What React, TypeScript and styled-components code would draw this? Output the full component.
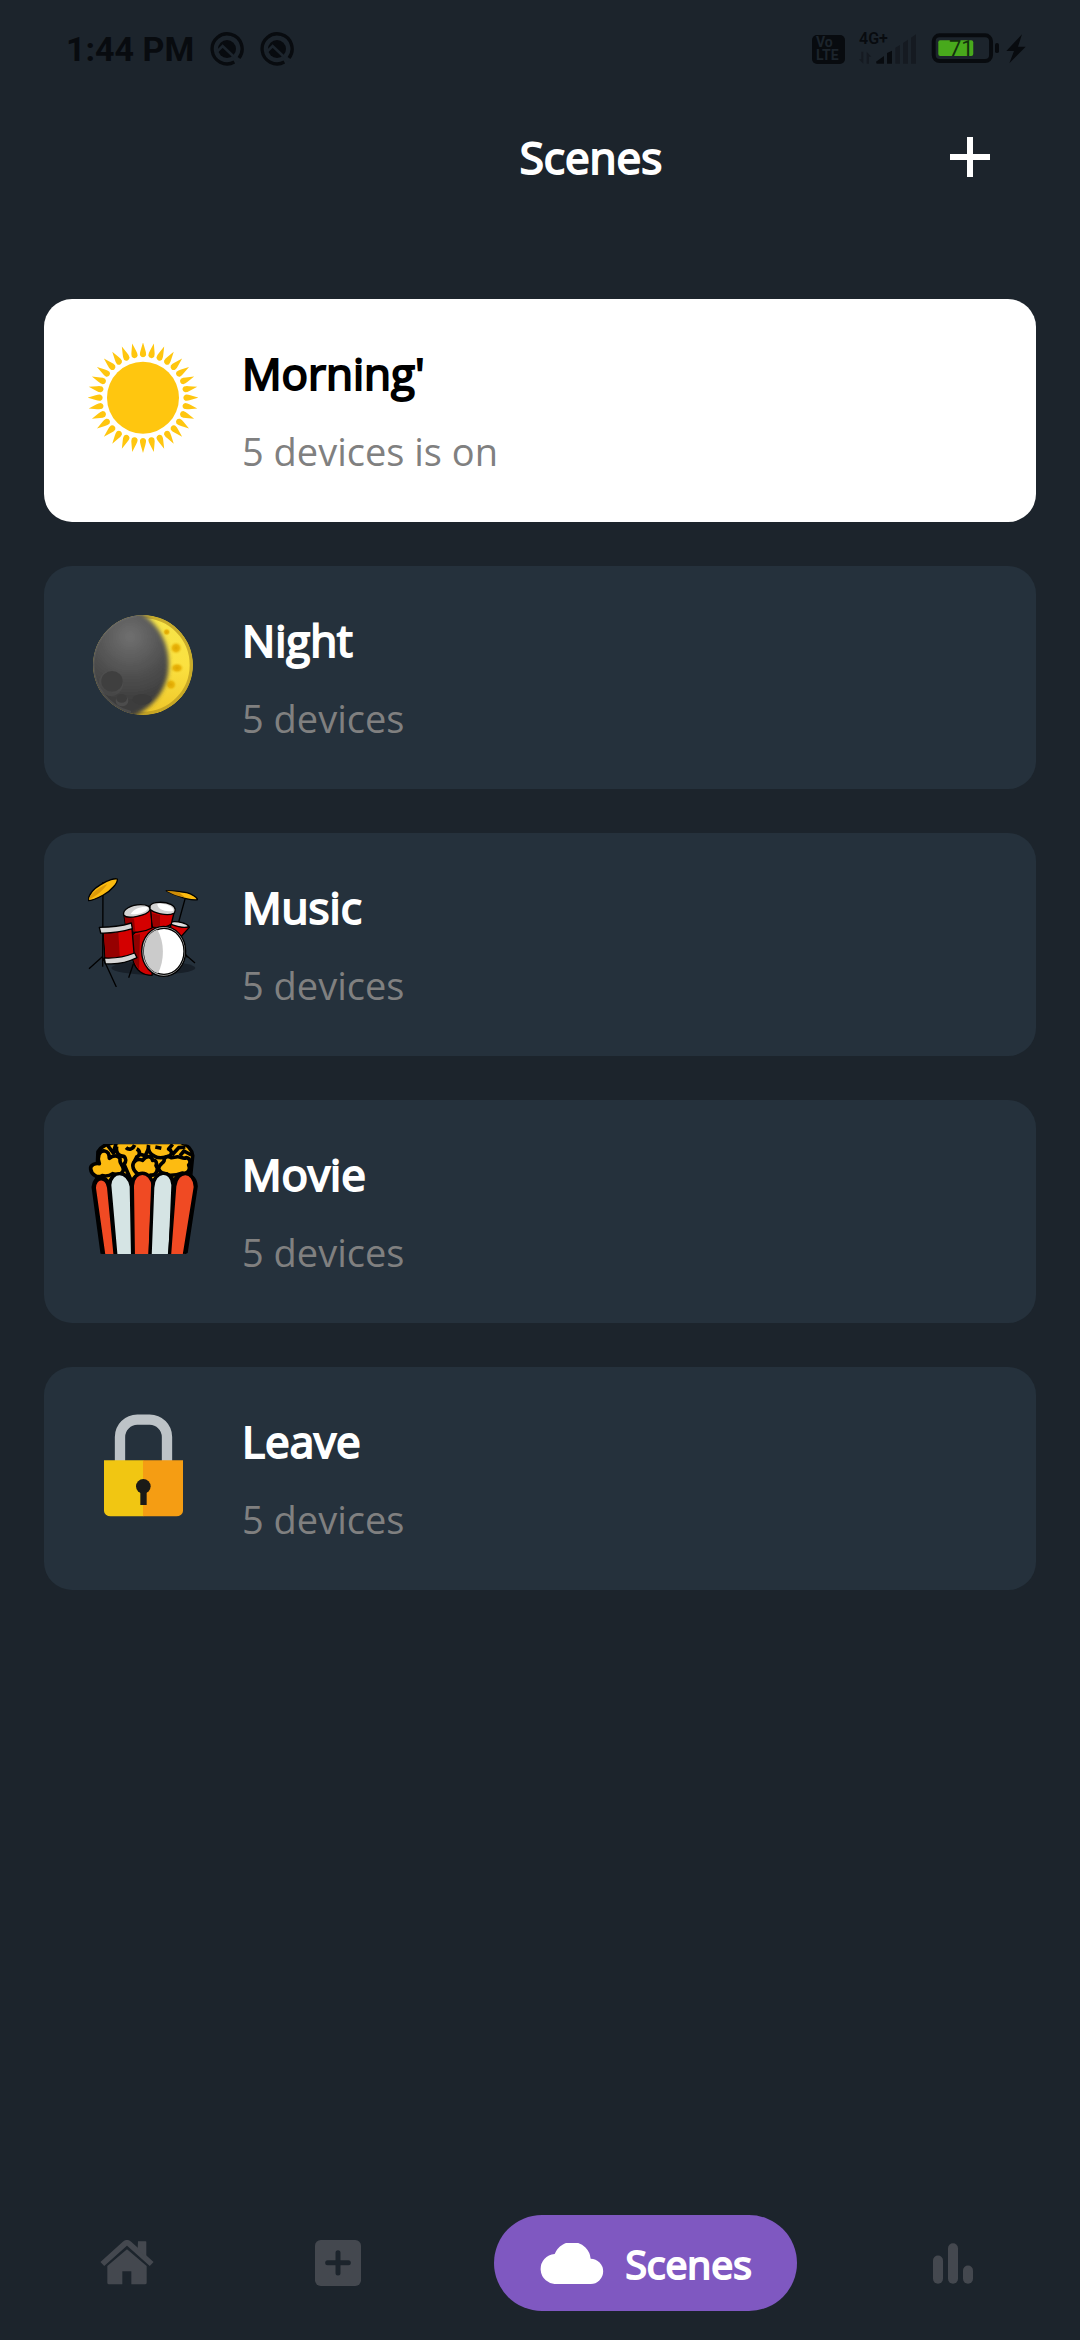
import React from "react";
import styled, { createGlobalStyle } from "styled-components";

const color = {
  page: "#1c242c",
  card: "#25313c",
  ink: "#080b0f",
  faint: "#151a21",
  muted: "#808080",
  idle: "#44484f",
  accent: "#7f58c1",
};

const GlobalStyle = createGlobalStyle`
  *, *::before, *::after { box-sizing: border-box; }
  body {
    margin: 0;
    background: ${color.page};
    font-family: "Open Sans", "Noto Sans", sans-serif;
  }
  button {
    margin: 0;
    border: 0;
    padding: 0;
    background: none;
    color: inherit;
    font: inherit;
    cursor: pointer;
  }
  svg { display: block; flex: none; }
`;

const Screen = styled.div`
  display: flex;
  flex-direction: column;
  min-height: 100vh;
  color: #fff;
`;

const StatusBar = styled.div`
  display: flex;
  align-items: center;
  justify-content: space-between;
  height: 98px;
  padding: 0 54px 0 66px;
  color: ${color.ink};
  font-family: Roboto, sans-serif;
`;

const StatusGroup = styled.div<{ $gap: number }>`
  display: flex;
  align-items: center;
  gap: ${(p) => p.$gap}px;
`;

const Clock = styled.span`
  font-size: 34px;
  font-weight: 700;
  line-height: 40px;
`;

const VolteBadge = styled.span`
  display: flex;
  flex-direction: column;
  justify-content: center;
  width: 33px;
  height: 29px;
  padding-left: 4px;
  border-radius: 5px;
  background: ${color.ink};
  color: ${color.page};
  font-size: 14px;
  font-weight: 700;
  line-height: 13px;
`;

const Stack = styled.span`
  display: grid;
  & > * { grid-area: 1 / 1; }
`;

const NetworkLabel = styled.span`
  font-size: 16px;
  font-weight: 600;
  line-height: 12px;
`;

const BatteryLevel = styled.span`
  padding-left: 18px;
  color: #12300c;
  font-size: 22px;
  line-height: 32px;
`;

const Header = styled.header`
  display: grid;
  grid-template-columns: 1fr auto 1fr;
  align-items: center;
  height: 117px;
  padding: 0 44px 0 146px;
`;

const Title = styled.h1`
  grid-column: 2;
  margin: 0;
  font-size: 44px;
  font-weight: 400;
  line-height: 60px;
  -webkit-text-stroke: 2px currentColor;
`;

const AddButton = styled.button`
  display: grid;
  place-items: center;
  justify-self: end;
  width: 132px;
  height: 116px;
`;

const SceneList = styled.main`
  display: flex;
  flex-direction: column;
  gap: 44px;
  padding: 84px 44px 44px;
`;

const SceneCard = styled.button<{ $active: boolean }>`
  display: flex;
  align-items: flex-start;
  gap: 44px;
  padding: 44px;
  border-radius: 28px;
  background: ${(p) => (p.$active ? "#fff" : color.card)};
  color: ${(p) => (p.$active ? "#000" : "#fff")};
  text-align: left;
`;

const SceneText = styled.span`
  display: flex;
  flex-direction: column;
  gap: 22px;
`;

const SceneName = styled.span`
  font-size: 44px;
  line-height: 60px;
  -webkit-text-stroke: 2px currentColor;
`;

const SceneInfo = styled.span`
  color: ${color.muted};
  font-size: 38px;
  line-height: 53px;
`;

const BottomNav = styled.nav`
  display: flex;
  align-items: center;
  justify-content: space-between;
  margin-top: auto;
  padding: 0 60px 29px 72px;
`;

const NavTab = styled.button<{ $active?: boolean; $pad?: number }>`
  display: flex;
  align-items: center;
  gap: 20px;
  height: 96px;
  padding: 0 ${(p) => p.$pad ?? 44}px;
  border-radius: 48px;
  background: ${(p) => (p.$active ? color.accent : "transparent")};
  color: ${(p) => (p.$active ? "#fff" : color.idle)};
`;

const NavLabel = styled.span`
  font-size: 39px;
  line-height: 53px;
  -webkit-text-stroke: 2px currentColor;
`;

const AppBadge = () => (
  <svg width="34" height="34" viewBox="-51 -51 102 102" fill="none">
    <path d="M22 39A45 45 0 1 1 36 27" stroke={color.ink} strokeWidth="10" />
    <circle r="27" fill={color.ink} />
    <path d="M-30 8L-13 -9L34 36" stroke={color.page} strokeWidth="8" />
  </svg>
);

const SignalIcon = () => (
  <svg width="58" height="32" viewBox="228 66 174 96">
    <g fill={color.faint}>
      <path d="M337 110L351 102V158H337ZM360 96L375 86V158H360ZM384 80L399 70V158H384Z" />
      <path d="M235 122H241V158L228 145H235ZM251 158V122L265 137H258V158Z" />
    </g>
    <path d="M279 152L303 135V158H281ZM312 126L327 119V158H312Z" fill={color.ink} />
  </svg>
);

const BatteryIcon = () => (
  <svg width="69" height="30" viewBox="446 71 207 91">
    <rect x="453" y="78" width="174" height="78" rx="18" fill="none" stroke={color.ink} strokeWidth="12" />
    <rect x="467" y="93" width="106" height="48" rx="6" fill="#48a91c" />
    <rect x="639" y="101" width="12" height="31" rx="6" fill={color.ink} />
  </svg>
);

const BoltIcon = () => (
  <svg width="20" height="30" viewBox="674 72 60 90">
    <path d="M722 73L675 123H698L684 160L733 110H710Z" fill={color.ink} />
  </svg>
);

const PlusIcon = () => (
  <svg width="40" height="40" viewBox="0 0 40 40">
    <path d="M20 0V40M0 20H40" stroke="#fff" strokeWidth="6" />
  </svg>
);

const rays = Array.from({ length: 32 }, (_, i) => i * 11.25);

const SunIcon = () => (
  <svg width="110" height="110" viewBox="-165 -164 330 330" fill="#ffc60f">
    <circle r="108" />
    {rays.map((angle) => (
      <path
        key={angle}
        transform={`rotate(${angle})`}
        d="M0 -166L7 -142Q10 -134 9 -127Q6 -121 0 -121Q-6 -121 -9 -127Q-10 -134 -7 -142Z"
      />
    ))}
  </svg>
);

const MoonIcon = () => (
  <svg width="110" height="110" viewBox="144 152 330 330">
    <defs>
      <radialGradient id="moonShade" gradientUnits="userSpaceOnUse" cx="270" cy="232" r="190">
        <stop offset="0" stopColor="#707070" />
        <stop offset="0.6" stopColor="#505050" />
        <stop offset="1" stopColor="#3e3e3e" />
      </radialGradient>
      <linearGradient id="moonLight" x1="0" y1="0" x2="0" y2="1">
        <stop offset="0" stopColor="#f6e54a" />
        <stop offset="0.5" stopColor="#fbe140" />
        <stop offset="1" stopColor="#efc629" />
      </linearGradient>
      <radialGradient id="moonCrater">
        <stop offset="0" stopColor="#dfa600" />
        <stop offset="0.5" stopColor="#e9b60c" />
        <stop offset="1" stopColor="#f7d936" stopOpacity="0" />
      </radialGradient>
      <filter id="moonBlur"><feGaussianBlur stdDeviation="6" /></filter>
      <clipPath id="moonClip"><circle cx="309" cy="317" r="150" /></clipPath>
    </defs>
    <g clipPath="url(#moonClip)">
      <circle cx="309" cy="317" r="150" fill="url(#moonLight)" />
      <circle cx="309" cy="317" r="145" fill="none" stroke="#b99a22" strokeOpacity="0.75" strokeWidth="10" />
      <circle cx="380" cy="218" r="12" fill="url(#moonCrater)" />
      <circle cx="408" cy="266" r="20" fill="url(#moonCrater)" />
      <ellipse cx="411" cy="326" rx="22" ry="17" fill="url(#moonCrater)" />
      <circle cx="393" cy="376" r="19" fill="url(#moonCrater)" />
      <path
        d="M282 150C350 182 386 245 386 315C386 385 345 443 272 475L120 480V140Z"
        fill="url(#moonShade)"
        filter="url(#moonBlur)"
      />
      <path d="M290 167A150 150 0 0 0 272 462" fill="none" stroke="#777" strokeOpacity="0.25" strokeWidth="14" />
      <ellipse cx="213" cy="372" rx="37" ry="38" fill="#555" fillOpacity="0.35" />
      <ellipse cx="216" cy="366" rx="32" ry="31" fill="#3f3f3f" />
      <ellipse cx="246" cy="424" rx="19" ry="17" fill="#4c4c4c" />
      <ellipse cx="245" cy="417" rx="16" ry="13" fill="#3c3c3c" />
      <ellipse cx="306" cy="420" rx="29" ry="16" fill="#3b3b3b" />
    </g>
  </svg>
);

const DrumsIcon = () => (
  <svg width="110" height="110" viewBox="54 51 330 330" stroke="#000" strokeWidth="4" strokeLinejoin="round">
    <ellipse cx="250" cy="324" rx="126" ry="20" fill="#182029" stroke="none" />
    <path
      d="M99 66L98 320M97 290L57 326M98 292L139 381M101 300L116 312M347 110L326 186M344 282L375 309M190 312L176 353M339 268L352 292"
      fill="none"
    />
    <path d="M54 122C56 104 68 88 92 74C114 60 136 54 142 57C144 68 124 92 100 105C82 115 62 122 54 122Z" fill="#fbbb10" />
    <path d="M56 118C62 100 84 84 112 72C102 88 78 110 56 118Z" fill="#dc9a08" stroke="none" />
    <path d="M289 92C312 93 334 96 350 98C366 102 380 112 383 119C366 121 342 115 325 108C312 103 298 98 289 92Z" fill="#fbbb10" />
    <path d="M289 92L326 96L344 112C320 108 304 101 289 92Z" fill="#cf8d08" stroke="none" />
    <path d="M302 186C324 184 346 190 358 202L326 238L302 220Z" fill="#d00000" />
    <path d="M300 186C326 182 350 190 357 199C346 206 322 200 303 193Z" fill="#e0e0e0" />
    <path d="M188 224C200 212 226 205 262 200L246 346C220 346 196 332 189 300Z" fill="#d10000" />
    <path d="M190 226L210 222L207 330L190 300Z" fill="#8f0000" stroke="none" />
    <path d="M162 165L168 206C184 222 220 218 246 204L243 142Z" fill="#d40000" />
    <path d="M163 168L192 176L196 215C178 212 168 208 168 202Z" fill="#940000" stroke="none" />
    <path d="M161 165C157 148 184 134 212 134C232 134 243 140 240 150C232 166 172 180 161 165Z" fill="#d3d3d3" />
    <path d="M182 162C192 146 214 138 234 142C236 152 212 166 182 162Z" fill="#fff" stroke="none" />
    <path d="M242 150L247 200C266 204 290 202 304 192L314 150Z" fill="#d40000" />
    <path d="M246 160L270 166V200L250 200Z" fill="#9c0000" stroke="none" />
    <path d="M240 137C248 124 284 124 304 134C318 142 318 152 312 160C290 170 250 158 240 148Z" fill="#d3d3d3" />
    <path d="M262 132C290 128 312 142 310 152C288 158 262 148 262 132Z" fill="#fff" stroke="none" />
    <path d="M99 212L106 308C136 308 166 304 193 290L186 206Z" fill="#d40000" />
    <path d="M102 218L145 215L150 300L108 304Z" fill="#960000" stroke="none" />
    <path d="M88 202C118 202 154 198 184 189L187 206C160 214 122 220 92 219Z" fill="#d6d6d6" />
    <path d="M103 294C136 296 166 290 194 279L201 293C176 306 138 314 106 311Z" fill="#d6d6d6" />
    <ellipse cx="281" cy="274" rx="66" ry="75" fill="#b9b9b9" />
    <ellipse cx="282" cy="274" rx="60" ry="69" fill="#fff" />
    <path d="M262 209C208 226 208 322 264 340C284 300 284 246 262 209Z" fill="#cbcbcb" stroke="none" />
  </svg>
);

const PopcornIcon = () => (
  <svg width="110" height="110" viewBox="54 57 330 330" stroke="#000" strokeWidth="11" strokeLinejoin="round">
    <defs>
      <clipPath id="tubClip"><rect x="54" y="57" width="330" height="330" rx="46" /></clipPath>
    </defs>
    <g clipPath="url(#tubClip)">
      <path d="M84 80C96 60 120 52 150 52H330C352 58 366 74 368 92L360 170H80Z" fill="#fdbb11" />
      <path d="M112 60L130 84L138 56M140 64C136 88 150 94 162 94C172 104 166 112 162 118L184 168" fill="none" />
      <path d="M168 68C178 78 190 70 194 60M200 72C212 78 210 92 200 96L190 116M204 86L226 92L236 70" fill="none" />
      <path d="M236 60C232 76 242 90 254 94C268 102 290 96 300 92C308 84 304 76 296 72L308 58" fill="none" />
      <path d="M256 66L274 70M306 90L326 68L346 66M330 92L342 78L364 90" fill="none" />
      <path
        d="M62 132C60 118 78 114 88 116C80 96 88 76 104 78C118 80 118 94 118 100C134 86 154 94 150 108C150 118 162 122 160 136C154 152 140 150 128 146C118 154 108 154 96 152C84 160 64 150 62 132Z"
        fill="#fdbb11"
      />
      <path
        d="M190 130C184 112 200 98 218 106C230 88 246 94 248 106C258 104 262 114 258 122C268 132 258 152 244 150C226 158 196 150 190 130Z"
        fill="#fdbb11"
      />
      <path
        d="M266 132C266 118 278 116 282 108C282 94 296 92 304 98L318 96C330 92 340 104 348 98C360 100 364 112 356 120C364 134 352 148 338 144C316 152 276 158 266 132Z"
        fill="#fdbb11"
      />
      <path d="M70 186C72 150 112 150 116 180C124 138 176 136 184 176C194 136 240 136 248 180C256 136 304 136 310 172C322 136 376 140 378 184L346 394H98Z" fill="#000" />
      <g strokeWidth="10">
        <path d="M73 190C72 154 112 150 116 188L136 396H102Z" fill="#f04a23" />
        <path d="M119 180C122 136 174 132 184 184L188 396H138Z" fill="#d5e4e4" />
        <path d="M187 182C190 132 244 132 250 184L240 396H190Z" fill="#f04a23" />
        <path d="M248 188C250 134 306 130 309 180L300 396H240Z" fill="#d5e4e4" />
        <path d="M314 184C320 132 374 134 376 186L342 396H298Z" fill="#f04a23" />
      </g>
    </g>
  </svg>
);

const LockIcon = () => (
  <svg width="110" height="110" viewBox="54 62 330 330">
    <path d="M150 212V140A52 52 0 0 1 202 88H239A52 52 0 0 1 291 140V212" fill="none" stroke="#bdc3c7" strokeWidth="31" />
    <path d="M102 210H220V378H122A20 16 0 0 1 102 362Z" fill="#f1c612" />
    <path d="M219 210H339V362A20 16 0 0 1 319 378H219Z" fill="#f59d13" />
    <circle cx="220" cy="288" r="22" fill="#1b1a17" />
    <rect x="211" y="300" width="19" height="44" fill="#1b1a17" />
  </svg>
);

const HomeIcon = () => (
  <svg width="56" height="46" viewBox="116 152 168 138" fill="currentColor">
    <path d="M126 224L194 163Q200 158 206 163L274 224" fill="none" stroke="currentColor" strokeWidth="17" strokeLinejoin="round" />
    <path d="M233 156H256Q258 156 258 158V204L232 180Z" />
    <path d="M200 180L259 230V280Q259 285 254 285H213V246H186V285H146Q141 285 141 280V230Z" />
  </svg>
);

const AddBoxIcon = () => (
  <svg width="46" height="46" viewBox="0 0 138 138">
    <rect width="138" height="138" rx="17" fill="currentColor" />
    <path d="M69 38V99M38 68H100" stroke={color.page} strokeWidth="15" strokeLinecap="round" />
  </svg>
);

const CloudIcon = () => (
  <svg width="66" height="41" viewBox="173 126 198 123" fill="currentColor">
    <path d="M226 249A45 45 0 0 1 220 159A56 56 0 0 1 328 173A38 38 0 0 1 327 249Z" />
  </svg>
);

const ChartIcon = () => (
  <svg width="40" height="41" viewBox="1313 157 120 122" fill="currentColor">
    <rect x="1313" y="194" width="30" height="85" rx="15" />
    <rect x="1358" y="157" width="30" height="122" rx="15" />
    <rect x="1403" y="224" width="30" height="55" rx="15" />
  </svg>
);

const scenes = [
  { name: "Morning'", info: "5 devices is on", icon: <SunIcon />, active: true },
  { name: "Night", info: "5 devices", icon: <MoonIcon />, active: false },
  { name: "Music", info: "5 devices", icon: <DrumsIcon />, active: false },
  { name: "Movie", info: "5 devices", icon: <PopcornIcon />, active: false },
  { name: "Leave", info: "5 devices", icon: <LockIcon />, active: false },
];

export default function App() {
  return (
    <>
      <GlobalStyle />
      <Screen>
        <StatusBar>
          <StatusGroup $gap={16}>
            <Clock>1:44 PM</Clock>
            <AppBadge />
            <AppBadge />
          </StatusGroup>
          <StatusGroup $gap={14}>
            <VolteBadge>
              <span>Vo</span>
              <span>LTE</span>
            </VolteBadge>
            <Stack>
              <SignalIcon />
              <NetworkLabel>4G+</NetworkLabel>
            </Stack>
            <StatusGroup $gap={6}>
              <Stack>
                <BatteryIcon />
                <BatteryLevel>71</BatteryLevel>
              </Stack>
              <BoltIcon />
            </StatusGroup>
          </StatusGroup>
        </StatusBar>
        <Header>
          <Title>Scenes</Title>
          <AddButton aria-label="Add scene">
            <PlusIcon />
          </AddButton>
        </Header>
        <SceneList>
          {scenes.map((scene) => (
            <SceneCard key={scene.name} $active={scene.active} aria-pressed={scene.active}>
              {scene.icon}
              <SceneText>
                <SceneName>{scene.name}</SceneName>
                <SceneInfo>{scene.info}</SceneInfo>
              </SceneText>
            </SceneCard>
          ))}
        </SceneList>
        <BottomNav>
          <NavTab $pad={27} aria-label="Home">
            <HomeIcon />
          </NavTab>
          <NavTab aria-label="Add device">
            <AddBoxIcon />
          </NavTab>
          <NavTab $active $pad={45} aria-current="page">
            <CloudIcon />
            <NavLabel>Scenes</NavLabel>
          </NavTab>
          <NavTab $pad={47} aria-label="Statistics">
            <ChartIcon />
          </NavTab>
        </BottomNav>
      </Screen>
    </>
  );
}
